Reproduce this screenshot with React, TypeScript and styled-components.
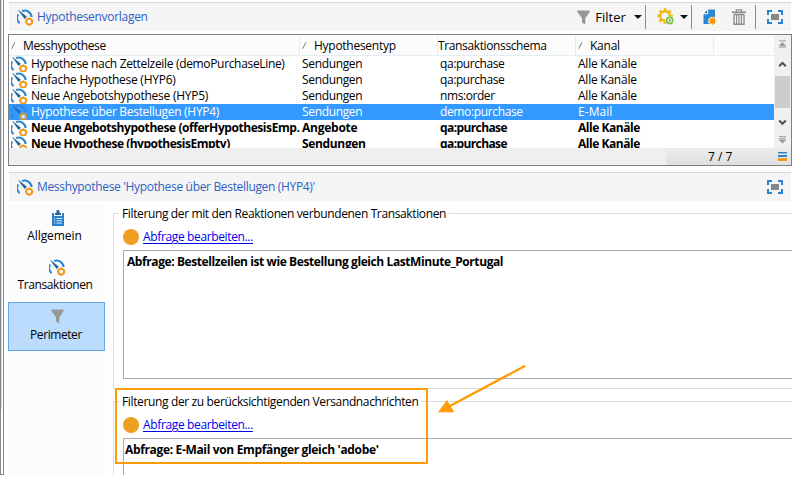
import React from "react";
import styled, { createGlobalStyle, css } from "styled-components";

const GlobalStyle = createGlobalStyle`
  * { box-sizing: border-box; }
  body { margin: 0; background: #fff; overflow: hidden; }
`;

const Page = styled.div`
  position: relative;
  display: flex;
  width: 810px;
  height: 492px;
  background: #fff;
  color: #000;
  font: 400 12px/16px "Open Sans", "Noto Sans", sans-serif;
`;

const Text = styled.span<{ $track?: number; $bold?: boolean }>`
  white-space: nowrap;
  letter-spacing: ${(p) => p.$track ?? -0.33}px;
  font-weight: ${(p) => (p.$bold ? 700 : 400)};
`;

/* Frame on the left edge */
const Splitter = styled.div`
  display: flex;
  width: 4px;
  height: 475px;
  border: solid #85858c;
  border-width: 0 1px 1px 1px;
`;
const SplitterTrack = styled.div`
  width: 1px;
  height: 409px;
  background: #dadada;
`;

const Main = styled.main`
  display: flex;
  flex-direction: column;
  width: 788px;
  height: 475px;
  padding: 2px 0 0 4px;
  overflow: hidden;
`;

const Bar = styled.header`
  display: flex;
  align-items: center;
  flex: none;
  height: 29px;
  margin-left: 1px;
  padding: 0 8px 0 8px;
  width: 782px;
  border-top: 1px solid #d7d7d7;
  background: #f5f5f5;
`;
const BarTitle = styled.h1`
  display: flex;
  align-items: center;
  gap: 3px;
  flex: 1;
  margin: 0;
  font: inherit;
  color: #2f5fc4;
`;
const Tools = styled.div`
  display: flex;
  align-items: center;
  height: 24px;
`;
const ToolButton = styled.button<{ $gap?: number; $before?: number }>`
  display: flex;
  align-items: center;
  gap: ${(p) => p.$gap ?? 0}px;
  margin: 0 0 0 ${(p) => p.$before ?? 0}px;
  padding: 0;
  border: 0;
  background: none;
  color: #000;
  font: inherit;
`;
const FilterLabel = styled(Text)`
  width: 31px;
  font-size: 13px;
`;
const Divider = styled.i<{ $before: number }>`
  width: 1px;
  height: 24px;
  margin-left: ${(p) => p.$before}px;
  background: #8b8b8b;
`;
const Caret = styled.i`
  border: solid transparent;
  border-width: 4px 4px 0;
  border-top-color: #111;
`;

/* List */
const Grid = styled.section`
  display: flex;
  flex-direction: column;
  flex: none;
  width: 784px;
  height: 132px;
  margin-top: 3px;
  border: 1px solid #7f8085;
`;
const GridBody = styled.div`
  display: flex;
  height: 113px;
`;
const Table = styled.div`
  display: flex;
  flex-direction: column;
  width: 765px;
  overflow: hidden;
`;
const columns = css`
  display: grid;
  grid-template-columns: 291px 138px 138px 138px 1fr;
  flex: none;
`;
const HeaderRow = styled.div`
  ${columns}
  height: 21px;
  border-bottom: 1px solid #e3edf6;
  background: #fcfcfc;
`;
const HeaderCell = styled.div<{ $plain?: boolean }>`
  display: flex;
  align-items: flex-start;
  gap: ${(p) => (p.$plain ? 0 : 7)}px;
  padding: 3px 0 0 ${(p) => (p.$plain ? 0 : 2)}px;
  border-right: 1px solid #e3edf6;
  &:last-child { border-right: 0; }
  svg { flex: none; margin-top: 4px; }
`;
const Row = styled.div<{ $selected?: boolean }>`
  ${columns}
  height: 16px;
  line-height: 15px;
  color: ${(p) => (p.$selected ? "#fff" : "#000")};
  background: ${(p) => (p.$selected ? "#3399ff" : "transparent")};
  svg { opacity: ${(p) => (p.$selected ? 0.75 : 1)}; }
`;
const Cell = styled.div`
  display: flex;
  min-width: 0;
  height: 16px;
  overflow: hidden;
  padding-left: 2px;
  svg { flex: none; margin-right: 3px; }
`;
const Scrollbar = styled.div`
  display: flex;
  flex-direction: column;
  align-items: center;
  width: 17px;
  background: #f0f0f0;
`;
const ScrollArrow = styled.div<{ $h: number }>`
  display: flex;
  align-items: center;
  justify-content: center;
  height: ${(p) => p.$h}px;
  width: 15px;
`;
const ScrollThumb = styled.div`
  width: 15px;
  height: 32px;
  background: #cdcdcd;
`;
const Status = styled.footer`
  display: flex;
  justify-content: flex-end;
  height: 17px;
  background: #efefef;
`;
const StatusInfo = styled.div`
  display: flex;
  align-items: center;
  justify-content: space-between;
  width: 125px;
  padding: 0 4px 0 42px;
  background: linear-gradient(#ececec, #dfdfdf);
`;

/* Detail */
const DetailBar = styled(Bar)`
  margin-top: 6px;
`;
const Detail = styled.div`
  display: flex;
  flex: none;
  height: 272px;
  margin-top: 3px;
`;
const Sidebar = styled.nav`
  width: 97px;
  background: #fcfcfc;
`;
const Tab = styled.div<{ $active?: boolean }>`
  display: flex;
  flex-direction: column;
  align-items: center;
  gap: 1px;
  height: 49px;
  padding-top: ${(p) => (p.$active ? 6 : 5)}px;
  border: 1px solid ${(p) => (p.$active ? "#66a7e8" : "transparent")};
  background: ${(p) => (p.$active ? "#bbdcfc" : "transparent")};
`;
const TabIcon = styled.div`
  display: flex;
  align-items: flex-start;
  height: 17px;
  margin-left: 2px;
`;
const TabLabel = styled(Text)<{ $shift?: number }>`
  margin-right: ${(p) => p.$shift ?? 0}px;
`;
const Groups = styled.div`
  display: flex;
  flex-direction: column;
  gap: 12px;
  width: 679px;
  margin-left: 8px;
  padding-top: 9px;
`;
const Group = styled.section<{ $h: number }>`
  flex: none;
  height: ${(p) => p.$h}px;
  border-left: 1px solid #dcdcdc;
  border-bottom: 1px solid #dcdcdc;
`;
const Legend = styled.div`
  display: flex;
  align-items: center;
  gap: 3px;
  height: 17px;
  margin-top: -8px;
  &::before { content: ""; width: 5px; height: 1px; background: #dcdcdc; }
  &::after { content: ""; flex: 1; height: 1px; background: #dcdcdc; }
`;
const QueryLine = styled.div`
  display: flex;
  align-items: center;
  gap: 4px;
  height: 18px;
  margin: 6px 0 0 9px;
`;
const Dot = styled.i`
  width: 16px;
  height: 16px;
  border-radius: 50%;
  background: #ee9f20;
`;
const Link = styled.a`
  color: #0000f0;
  text-decoration: underline;
  text-underline-offset: 2px;
  letter-spacing: -0.36px;
  white-space: nowrap;
`;
const QueryBox = styled.div<{ $h: number; $inset: number }>`
  height: ${(p) => p.$h}px;
  margin: 4px 0 0 9px;
  padding: 3px 0 0 ${(p) => p.$inset}px;
  border: solid #a9a9af;
  border-width: 1px 0 1px 1px;
`;

/* Annotation lying over the form */
const Highlight = styled.div`
  position: absolute;
  left: 115px;
  top: 388px;
  width: 313px;
  height: 76px;
  border: 2px solid #ff9b05;
`;
const Pointer = styled.svg`
  position: absolute;
  left: 434px;
  top: 360px;
`;

const Gauge = () => (
  <svg width="17" height="17" viewBox="0 0 17 17" fill="none">
    <path d="M2.6 14.2A7 7 0 0 1 1.2 5.4" stroke="#2f86cf" strokeWidth="1.9" />
    <path d="M5 2A7 7 0 0 1 14.6 8" stroke="#2f86cf" strokeWidth="2.1" />
    <path d="M1.7 1.4L9.6 7.8 7.7 9.8z" fill="#205f9e" stroke="#205f9e" strokeWidth="0.5" />
    <circle cx="12.2" cy="12.6" r="2.9" fill="#fff" stroke="#f09a1a" strokeWidth="2" />
    <path d="M12.2 8.4v1M12.2 15.8v1M8 12.6h1M15.4 12.6h1" stroke="#f09a1a" strokeWidth="1.5" />
  </svg>
);
const Funnel = () => (
  <svg width="13" height="15" viewBox="0 0 13 15">
    <path d="M0.3 0.5h12.4v1.6L8.3 8.2V14.6L5 12.4V8.2L0.3 2.1z" fill="#989898" />
  </svg>
);
const Gear = () => (
  <svg width="18" height="18" viewBox="0 0 18 18" fill="none">
    <circle cx="8" cy="8" r="4.8" stroke="#efb60c" strokeWidth="2.4" />
    <circle cx="8" cy="8" r="6.7" stroke="#efb60c" strokeWidth="2.2" strokeDasharray="2.6 2.66" strokeDashoffset="1.3" />
    <circle cx="12.7" cy="12.5" r="4.3" fill="#f5f5f5" />
    <circle cx="12.7" cy="12.5" r="3" fill="#fff" stroke="#83c34b" strokeWidth="1.8" />
    <path d="M11.8 10.8v3.4l2.6-1.7z" fill="#6fb432" />
  </svg>
);
const NewDoc = () => (
  <svg width="14" height="17" viewBox="0 0 14 17">
    <path d="M5 0.5H12V15H0.5V5z" fill="#2b86d4" />
    <path d="M0.2 5.2V4L4.2 0.2H5.2V5.2z" fill="#fff" />
    <path d="M1.3 4.2L4.2 1.3V4.2z" fill="#20639e" />
    <circle cx="9.3" cy="12" r="4.3" fill="#f5f5f5" />
    <circle cx="9.3" cy="12" r="2.7" fill="#f39a0c" />
    <path d="M9.3 8v8M5.3 12h8M6.5 9.2l5.6 5.6M12.1 9.2l-5.6 5.6" stroke="#f39a0c" strokeWidth="1.1" />
  </svg>
);
const Trash = () => (
  <svg width="14" height="16" viewBox="0 0 14 16" fill="none" stroke="#8e8e8e">
    <path d="M0 3.3H14" strokeWidth="1.7" />
    <path d="M4.4 2.8V0.9H9.6V2.8" strokeWidth="1.3" />
    <path d="M2 5.5V15.2H12V5.5M2 5.5H12" strokeWidth="1.4" />
    <path d="M4.6 5.5V15M7 5.5V15M9.4 5.5V15" strokeWidth="1.2" />
  </svg>
);
const Expand = () => (
  <svg width="16" height="14" viewBox="0 0 16 14" fill="none">
    <path d="M1 5V1H5M11 1H15V5M15 9V13H11M5 13H1V9" stroke="#2b82d0" strokeWidth="2" />
    <rect x="4" y="4" width="8" height="6" fill="#878787" />
  </svg>
);
const Clipboard = () => (
  <svg width="12" height="16" viewBox="0 0 12 16">
    <path d="M0 3H12V16H0z" fill="#2980cc" />
    <path d="M2 2.5H10V6H2z" fill="#fff" />
    <path d="M3 3H4.4V1.3Q4.4 0 6 0T7.6 1.3V3H9V5H3z" fill="#2167a8" />
    <path d="M2 8.5H3.2M4.5 8.5H10M2 10.8H3.2M4.5 10.8H10M2 13.1H3.2M4.5 13.1H10" stroke="#d8ebfa" />
  </svg>
);
const SortMark = () => (
  <svg width="5" height="7" viewBox="0 0 5 7">
    <path d="M0.6 6.7L4 0.3" stroke="#777" strokeWidth="1" />
  </svg>
);
const ToTop = () => (
  <svg width="9" height="8" viewBox="0 0 9 8">
    <path d="M1 .9H8M1 7.1H8" stroke="#999" strokeWidth="1" />
    <path d="M.8 6L4.5 2 8.2 6z" fill="#999" />
  </svg>
);
const ToBottom = () => (
  <svg width="9" height="8" viewBox="0 0 9 8">
    <path d="M1 .7H8M1 2.8H8" stroke="#999" strokeWidth="1" />
    <path d="M.8 3.8H8.2L4.5 7.6z" fill="#999" />
  </svg>
);
const Chevron = ({ up }: { up?: boolean }) => (
  <svg width="9" height="7" viewBox="0 0 9 7" fill="none">
    <path d={up ? "M1.2 5.2L4.5 1.9 7.8 5.2" : "M1.2 1.5L4.5 4.8 7.8 1.5"} stroke="#505050" strokeWidth="2" />
  </svg>
);
const Layers = () => (
  <svg width="9" height="9" viewBox="0 0 9 9">
    <path d="M0 0H9V1.6H0zM0 3H9V5H0z" fill="#3181c8" />
    <path d="M0 6H9V9H0z" fill="#f19c1c" />
  </svg>
);

type Item = {
  cells: [string, number][];
  bold?: boolean;
  selected?: boolean;
};
const items: Item[] = [
  { cells: [["Hypothese nach Zettelzeile (demoPurchaseLine)", -0.33], ["Sendungen", -0.34], ["qa:purchase", -0.42], ["Alle Kanäle", -0.24]] },
  { cells: [["Einfache Hypothese (HYP6)", -0.25], ["Sendungen", -0.34], ["qa:purchase", -0.42], ["Alle Kanäle", -0.24]] },
  { cells: [["Neue Angebotshypothese (HYP5)", -0.25], ["Sendungen", -0.34], ["nms:order", -0.42], ["Alle Kanäle", -0.24]] },
  { cells: [["Hypothese über Bestellugen (HYP4)", -0.3], ["Sendungen", -0.34], ["demo:purchase", -0.36], ["E-Mail", 0.05]], selected: true },
  { cells: [["Neue Angebotshypothese (offerHypothesisEmp.", -0.43], ["Angebote", -0.25], ["qa:purchase", -0.6], ["Alle Kanäle", -0.46]], bold: true },
  { cells: [["Neue Hypothese (hypothesisEmpty)", -0.48], ["Sendungen", -0.34], ["qa:purchase", -0.6], ["Alle Kanäle", -0.46]], bold: true },
];

export default function App() {
  return (
    <Page>
      <GlobalStyle />
      <Splitter>
        <SplitterTrack />
      </Splitter>
      <Main>
        <Bar>
          <BarTitle>
            <Gauge />
            <Text $track={-0.3}>Hypothesenvorlagen</Text>
          </BarTitle>
          <Tools>
            <ToolButton $gap={5}>
              <Funnel />
              <FilterLabel $track={0}>Filter</FilterLabel>
            </ToolButton>
            <ToolButton $before={8}><Caret /></ToolButton>
            <Divider $before={3} />
            <ToolButton $before={11} $gap={5}>
              <Gear />
              <Caret />
            </ToolButton>
            <Divider $before={3} />
            <ToolButton $before={11}><NewDoc /></ToolButton>
            <ToolButton $before={15}><Trash /></ToolButton>
            <Divider $before={9} />
            <ToolButton $before={11}><Expand /></ToolButton>
          </Tools>
        </Bar>

        <Grid>
          <GridBody>
            <Table>
              <HeaderRow>
                <HeaderCell><SortMark /><Text $track={-0.38}>Messhypothese</Text></HeaderCell>
                <HeaderCell><SortMark /><Text $track={-0.27}>Hypothesentyp</Text></HeaderCell>
                <HeaderCell $plain><Text $track={-0.37}>Transaktionsschema</Text></HeaderCell>
                <HeaderCell><SortMark /><Text $track={-0.25}>Kanal</Text></HeaderCell>
                <HeaderCell $plain />
              </HeaderRow>
              {items.map((item, r) => (
                <Row key={r} $selected={item.selected}>
                  {item.cells.map(([label, track], c) => (
                    <Cell key={c}>
                      {c === 0 && <Gauge />}
                      <Text $track={track} $bold={item.bold}>{label}</Text>
                    </Cell>
                  ))}
                </Row>
              ))}
            </Table>
            <Scrollbar>
              <ScrollArrow $h={17}><ToTop /></ScrollArrow>
              <ScrollArrow $h={24}><Chevron up /></ScrollArrow>
              <ScrollThumb />
              <ScrollArrow $h={28}><Chevron /></ScrollArrow>
              <ScrollArrow $h={8}><ToBottom /></ScrollArrow>
            </Scrollbar>
          </GridBody>
          <Status>
            <StatusInfo>
              <Text $track={0}>7 / 7</Text>
              <Layers />
            </StatusInfo>
          </Status>
        </Grid>

        <DetailBar>
          <BarTitle>
            <Gauge />
            <Text $track={-0.33}>Messhypothese 'Hypothese über Bestellugen (HYP4)'</Text>
          </BarTitle>
          <Expand />
        </DetailBar>

        <Detail>
          <Sidebar>
            <Tab>
              <TabIcon><Clipboard /></TabIcon>
              <TabLabel $track={-0.08} $shift={4}>Allgemein</TabLabel>
            </Tab>
            <Tab>
              <TabIcon><Gauge /></TabIcon>
              <TabLabel $track={-0.4} $shift={3}>Transaktionen</TabLabel>
            </Tab>
            <Tab $active>
              <TabIcon><Funnel /></TabIcon>
              <TabLabel $track={-0.42} $shift={1}>Perimeter</TabLabel>
            </Tab>
          </Sidebar>
          <Groups>
            <Group $h={176}>
              <Legend><Text $track={-0.37}>Filterung der mit den Reaktionen verbundenen Transaktionen</Text></Legend>
              <QueryLine><Dot /><Link>Abfrage bearbeiten...</Link></QueryLine>
              <QueryBox $h={129} $inset={3}>
                <Text $bold $track={-0.41}>Abfrage: Bestellzeilen ist wie Bestellung gleich LastMinute_Portugal</Text>
              </QueryBox>
            </Group>
            <Group $h={90}>
              <Legend><Text $track={-0.36}>Filterung der zu berücksichtigenden Versandnachrichten</Text></Legend>
              <QueryLine><Dot /><Link>Abfrage bearbeiten...</Link></QueryLine>
              <QueryBox $h={60} $inset={1}>
                <Text $bold $track={-0.34}>Abfrage: E-Mail von Empfänger gleich 'adobe'</Text>
              </QueryBox>
            </Group>
          </Groups>
        </Detail>
      </Main>
      <Highlight />
      <Pointer width="96" height="56" viewBox="434 360 96 56">
        <path d="M525.3 365.7L449 406.5" stroke="#ff9b05" strokeWidth="2.3" />
        <path d="M438 412.3L447 400 454.3 412.3z" fill="#ff9b05" />
      </Pointer>
    </Page>
  );
}
